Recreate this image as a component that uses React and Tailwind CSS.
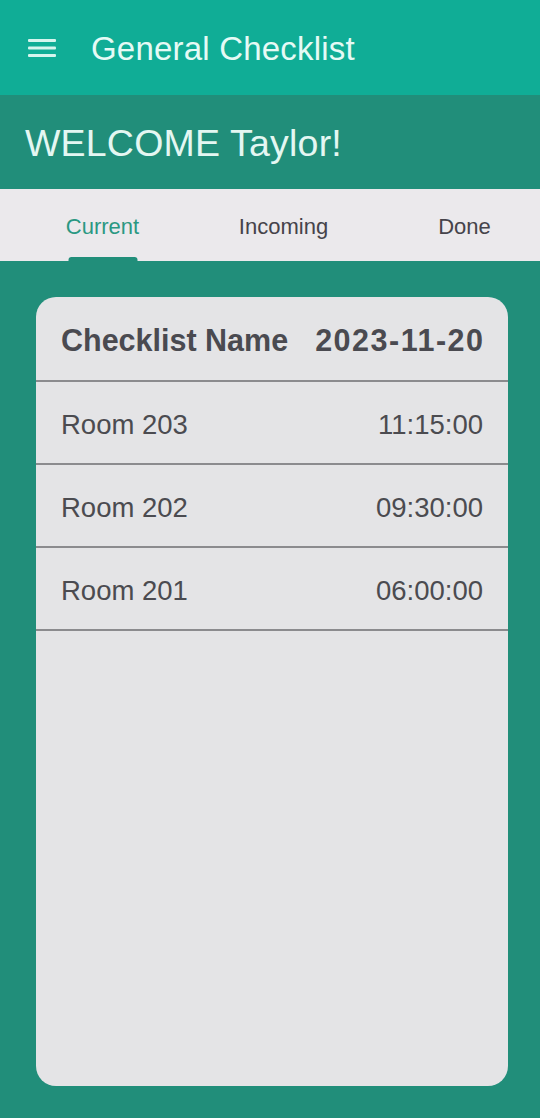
import React, { useState } from 'react';

const rows = [
    { name: 'Room 203', time: '11:15:00' },
    { name: 'Room 202', time: '09:30:00' },
    { name: 'Room 201', time: '06:00:00' },
];

const tabs = ['Current', 'Incoming', 'Done'];

const App = () => {
    const [activeTab, setActiveTab] = useState('Current');

    return (
        <div className="min-h-[1118px] flex flex-col bg-[#218e7a] font-['Liberation_Sans',Arial,sans-serif]">
            {/* App bar */}
            <div className="h-[95px] flex items-center bg-[#10ad96] pl-[28px] pt-[1px]">
                <svg width="28" height="20" viewBox="0 0 28 20" className="shrink-0">
                    <rect x="0" y="1" width="28" height="3" rx="1" fill="#d6f5ee" />
                    <rect x="0" y="8.5" width="28" height="3" rx="1" fill="#d6f5ee" />
                    <rect x="0" y="16" width="28" height="3" rx="1" fill="#d6f5ee" />
                </svg>
                <h1 className="ml-[35px] text-[33px] leading-none text-[#e5faf5] tracking-[0.2px]">General Checklist</h1>
            </div>

            {/* Welcome banner */}
            <div className="h-[94px] flex items-center px-[25px] pt-[3px] bg-[#218e7a]">
                <h2 className="text-[37.5px] leading-none text-[#e4f7f2] tracking-[0.2px]">WELCOME Taylor!</h2>
            </div>

            {/* Tabs */}
            <div className="h-[72px] grid grid-cols-[181px_181px_181px] pl-[12px] overflow-hidden bg-[#ebe9ec]">
                {tabs.map(tab => (
                    <button
                        key={tab}
                        onClick={() => setActiveTab(tab)}
                        className="relative flex items-center justify-center pt-[3px]"
                    >
                        <span className={`text-[22px] leading-none ${activeTab === tab ? 'text-[#2a9882]' : 'text-[#45434a]'}`}>
                            {tab}
                        </span>
                        {activeTab === tab && (
                            <span className="absolute bottom-0 left-1/2 -translate-x-1/2 w-[69px] h-[4px] rounded-t-[3px] bg-[#218e7a]" />
                        )}
                    </button>
                ))}
            </div>

            {/* Checklist card */}
            <div className="flex-1 pl-[36px] pr-[32px] pt-[36px] pb-[32px]">
                <div className="h-[789px] rounded-[20px] bg-[#e4e4e6] overflow-hidden">
                    <div className="h-[85px] flex items-center justify-between px-[25px] pt-[3px] border-b-2 border-[#8b8b8e]">
                        <span className="text-[30.5px] font-bold text-[#4a4a50] leading-none">Checklist Name</span>
                        <span className="text-[30.5px] font-bold text-[#4a4a50] leading-none tracking-[1.5px] -mr-[1.5px]">2023-11-20</span>
                    </div>
                    {rows.map(row => (
                        <div
                            key={row.name}
                            className="h-[83px] flex items-center justify-between px-[25px] pt-[4px] border-b-2 border-[#8b8b8e]"
                        >
                            <span className="text-[27.5px] text-[#4b4b50] leading-none">{row.name}</span>
                            <span className="text-[27.5px] text-[#4b4b50] leading-none">{row.time}</span>
                        </div>
                    ))}
                </div>
            </div>
        </div>
    );
};

export default App;
